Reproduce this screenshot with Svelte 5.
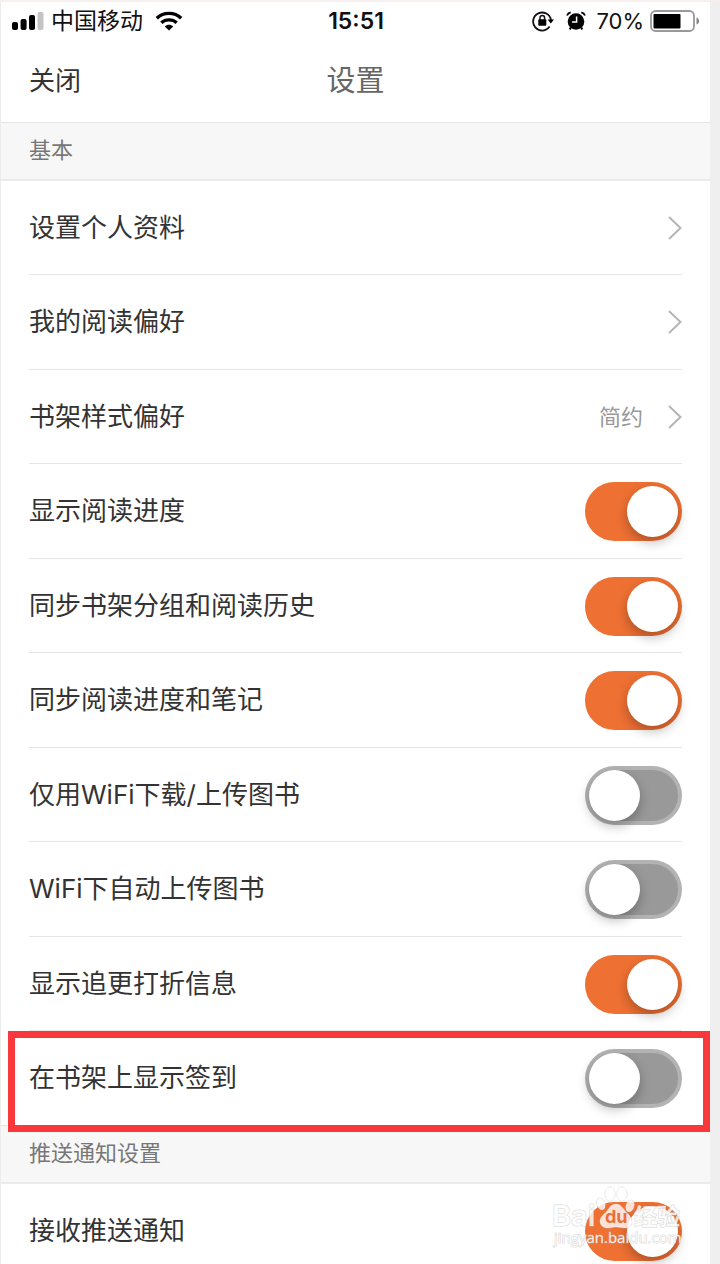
<script lang="ts">
  interface Row {
    id: string;
    label: string;
    kind: "link" | "switch";
    value?: string;
    on?: boolean;
    marked?: boolean;
  }

  interface Section {
    title: string;
    rows: Row[];
  }

  let sections = $state<Section[]>([
    {
      title: "基本",
      rows: [
        { id: "profile", label: "设置个人资料", kind: "link" },
        { id: "taste", label: "我的阅读偏好", kind: "link" },
        { id: "shelf-style", label: "书架样式偏好", kind: "link", value: "简约" },
        { id: "progress", label: "显示阅读进度", kind: "switch", on: true },
        { id: "sync-shelf", label: "同步书架分组和阅读历史", kind: "switch", on: true },
        { id: "sync-notes", label: "同步阅读进度和笔记", kind: "switch", on: true },
        { id: "wifi-only", label: "仅用WiFi下载/上传图书", kind: "switch", on: false },
        { id: "wifi-upload", label: "WiFi下自动上传图书", kind: "switch", on: false },
        { id: "discount", label: "显示追更打折信息", kind: "switch", on: true },
        { id: "check-in", label: "在书架上显示签到", kind: "switch", on: false, marked: true },
      ],
    },
    {
      title: "推送通知设置",
      rows: [{ id: "push", label: "接收推送通知", kind: "switch", on: true }],
    },
  ]);
</script>

<div class="page">
  <div class="screen">
    <div class="status">
      <div class="status-side">
        <svg class="signal" width="32" height="20" viewBox="0 0 32 20" aria-hidden="true">
          <rect x="0" y="11" width="6" height="8" rx="2" />
          <rect x="8.600" y="8" width="6" height="11" rx="2" />
          <rect x="17" y="4" width="6" height="15" rx="2" />
          <rect x="25.500" y="1" width="6" height="18" rx="2" fill="#c4c4c4" />
        </svg>
        <span class="carrier">中国移动</span>
        <svg width="28" height="20" viewBox="0 0 28 20" aria-hidden="true">
          <g fill="none" stroke="#000" stroke-width="3.400">
            <path d="M1.800 7.200C8.500 .8 19.500 .8 26.200 7.200" />
            <path d="M6.300 11.800C10.500 7.900 17.500 7.900 21.700 11.800" />
          </g>
          <path d="M9.800 15.400C12.200 13.200 15.800 13.200 18.200 15.400L14 19.600Z" />
        </svg>
      </div>
      <span class="time">15:51</span>
      <div class="status-side status-right">
        <svg width="22" height="22" viewBox="0 0 22 22" aria-hidden="true">
          <path d="M17.600 16.600A9 9 0 1 1 19 10" fill="none" stroke="#111" stroke-width="1.800" />
          <path d="M15.600 9.400H22L18.800 13.600Z" />
          <rect x="6.300" y="9.300" width="8" height="6.500" rx="1" />
          <path d="M8 10V7.800a2.300 2.300 0 0 1 4.600 0V10" fill="none" stroke="#111" stroke-width="1.500" />
        </svg>
        <svg class="alarm" width="20" height="20" viewBox="0 0 20 20" aria-hidden="true">
          <circle cx="10" cy="10.500" r="8.300" />
          <path d="M4.800 16.500L3.800 18.500M15.200 16.500L16.200 18.500" stroke="#000" stroke-width="2" />
          <path d="M1 4.500C1.600 2.800 2.800 1.700 4.700 1.300M19 4.500C18.400 2.800 17.200 1.700 15.300 1.300" fill="none" stroke="#000" stroke-width="1.800" />
          <path d="M10.600 5.500V11H6" fill="none" stroke="#fff" stroke-width="1.500" />
        </svg>
        <span class="percent">70%</span>
        <svg width="50" height="22" viewBox="0 0 50 22" aria-hidden="true">
          <rect x="1" y="1" width="43" height="20" rx="4.500" fill="#fff" stroke="#999" stroke-width="1.800" />
          <rect x="3.500" y="4" width="27" height="14.500" rx="1" />
          <path d="M46.500 7.500C50 8.500 50 13.500 46.500 14.500Z" fill="#888" />
        </svg>
      </div>
    </div>

    <header class="nav">
      <button type="button" class="close">关闭</button>
      <h1>设置</h1>
    </header>

    <main>
      {#each sections as section}
        <h2>{section.title}</h2>
        <ul>
          {#each section.rows as row (row.id)}
            <li class:marked={row.marked}>
              {#if row.kind === "link"}
                <a class="row" href="#{row.id}">
                  <span class="label">{row.label}</span>
                  {#if row.value}<span class="value">{row.value}</span>{/if}
                  <svg class="chevron" width="14" height="24" viewBox="0 0 14 24" aria-hidden="true">
                    <path d="M1 1L12.500 12L1 23" fill="none" stroke="#b5b5b5" stroke-width="2" />
                  </svg>
                </a>
              {:else}
                <div class="row">
                  <label class="label" for={row.id}>{row.label}</label>
                  <input id={row.id} type="checkbox" role="switch" class="switch" bind:checked={row.on} />
                </div>
              {/if}
            </li>
          {/each}
        </ul>
      {/each}
    </main>
  </div>

  <svg class="watermark" width="134" height="64" viewBox="0 0 134 64" aria-hidden="true">
    <g class="paw">
      <ellipse cx="59" cy="9" rx="5" ry="7" />
      <ellipse cx="71" cy="9" rx="5" ry="7" />
      <ellipse cx="50" cy="19" rx="4" ry="6" transform="rotate(-18 50 19)" />
      <ellipse cx="79" cy="21" rx="4" ry="6" transform="rotate(18 79 21)" />
      <path d="M65 19C59 19 58 25 53 29C46 35 49 43 57 43C61 43 62 42 65 42C68 42 70 43 74 43C81 43 83 36 78 30C72 25 71 19 65 19Z" />
    </g>
    <text class="brand" x="1" y="41">Bai</text>
    <text class="du" x="54" y="38">du</text>
    <text class="brand cjk" x="83" y="40">经验</text>
    <text class="url" x="3" y="58">jingyan.baidu.com</text>
  </svg>
</div>

<style>
  :global(body) {
    margin: 0;
    background: #efefef;
  }
  .page {
    position: relative;
    box-sizing: border-box;
    height: 100vh;
    overflow: hidden;
    padding-right: 10px;
    border-top: 2px solid #f7efed;
    font-family: Inter, "Noto Sans CJK SC", sans-serif;
    color: #333;
  }
  .screen {
    background: #fff;
    border-left: 1px solid #ececec;
  }
  .status {
    display: grid;
    grid-template-columns: 1fr auto 1fr;
    align-items: center;
    height: 38px;
    padding: 0 10px 0 11px;
    color: #111;
  }
  .status-side {
    display: flex;
    align-items: center;
  }
  .status-right {
    justify-content: flex-end;
  }
  .carrier {
    margin: 0 12px 0 7px;
    font-size: 23px;
    line-height: 32px;
  }
  .time {
    font-size: 23px;
    font-weight: 600;
  }
  .alarm {
    margin: 0 10px 0 12px;
  }
  .percent {
    margin-right: 6px;
    font-size: 22px;
  }
  .nav {
    display: grid;
    grid-template-columns: 1fr auto 1fr;
    align-items: center;
    height: 82px;
    padding: 0 28px;
  }
  .close {
    justify-self: start;
    padding: 0;
    border: 0;
    background: none;
    font: inherit;
    font-size: 26px;
    line-height: 40px;
    color: #333;
    cursor: pointer;
  }
  h1 {
    margin: 0;
    font-size: 29px;
    font-weight: 400;
    line-height: 40px;
    color: #666;
  }
  h2 {
    box-sizing: border-box;
    height: 59px;
    margin: 0;
    padding: 0 28px;
    border-top: 1px solid #e5e5e5;
    border-bottom: 2px solid #ebebeb;
    background: #f7f7f7;
    font-size: 22px;
    font-weight: 400;
    line-height: 54px;
    color: #777;
  }
  ul {
    margin: 0;
    padding: 0 28px;
    list-style: none;
  }
  li {
    position: relative;
    box-sizing: border-box;
    height: 94px;
    border-bottom: 1px solid #e5e5e5;
  }
  li:nth-child(even) {
    height: 95px;
  }
  li:last-child {
    height: 94px;
    border-bottom: 0;
  }
  .marked::after {
    content: "";
    position: absolute;
    inset: 0 -28px -7px -21px;
    border: 7px solid #f8383b;
    pointer-events: none;
  }
  .row {
    display: flex;
    align-items: center;
    height: 100%;
    color: inherit;
    text-decoration: none;
  }
  .label {
    flex: 1;
    font-size: 26px;
    line-height: 40px;
  }
  .value {
    margin-right: 25px;
    font-size: 22px;
    line-height: 40px;
    color: #999;
  }
  .switch {
    appearance: none;
    box-sizing: border-box;
    width: 97px;
    height: 59px;
    margin: 1px 0 0;
    border: 4px solid #b3b3b3;
    border-radius: 30px;
    background: #999;
    cursor: pointer;
  }
  .switch::before {
    content: "";
    display: block;
    width: 51px;
    height: 51px;
    border-radius: 50%;
    background: #fff;
    box-shadow: 0 5px 12px rgba(0, 0, 0, 0.28);
  }
  .switch:checked {
    border-color: #ee7033;
    background: #ee7033;
  }
  .switch:checked::before {
    margin-left: auto;
  }
  .watermark {
    position: absolute;
    right: 35px;
    bottom: 15px;
    pointer-events: none;
  }
  .watermark text,
  .paw {
    fill: rgba(255, 255, 255, 0.8);
    stroke: rgba(190, 190, 190, 0.6);
    stroke-width: 1px;
    paint-order: stroke;
  }
  .watermark .brand {
    font-size: 29px;
    font-weight: 600;
  }
  .watermark .cjk {
    font-size: 23px;
  }
  .watermark .du {
    font-size: 18px;
    font-weight: 700;
    fill: #e8703a;
    stroke: none;
  }
  .watermark .url {
    font-family: "Open Sans", sans-serif;
    font-size: 15px;
  }
</style>
